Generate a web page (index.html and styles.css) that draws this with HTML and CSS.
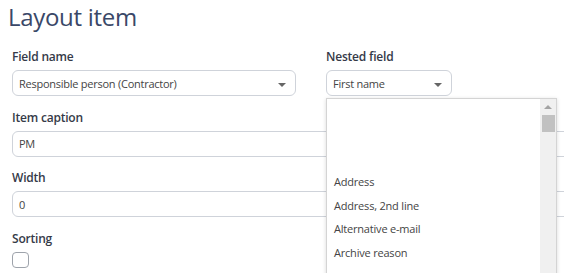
FILE: index.html
```html
<!DOCTYPE html>
<html lang="en">
<head>
    <meta charset="UTF-8">
    <title>Layout item</title>
    <link rel="stylesheet" href="styles.css">
</head>
<body>

    <div class="page">
        <h1>Layout item</h1>

        <!-- Field + nested field -->
        <div class="field-row">
            <div class="field">
                <label>Field name</label>
                <div class="select select-wide">
                    <span>Responsible person (Contractor)</span>
                    <span class="caret"></span>
                </div>
            </div>
            <div class="field nested">
                <label>Nested field</label>
                <div class="select select-small">
                    <span>First name</span>
                    <span class="caret"></span>
                </div>

                <!-- Open dropdown list -->
                <div class="dropdown-list">
                    <ul>
                        <li>Address</li>
                        <li>Address, 2nd line</li>
                        <li>Alternative e-mail</li>
                        <li>Archive reason</li>
                    </ul>
                    <div class="scrollbar">
                        <span class="arrow-up"></span>
                        <span class="thumb"></span>
                    </div>
                </div>
            </div>
        </div>

        <div class="field">
            <label>Item caption</label>
            <div class="input">PM</div>
        </div>

        <div class="field">
            <label>Width</label>
            <div class="input">0</div>
        </div>

        <div class="field">
            <label>Sorting</label>
            <div class="checkbox"></div>
        </div>
    </div>

</body>
</html>
```

FILE: styles.css
```css
body {
    margin: 0;
    font-family: 'Open Sans', sans-serif;
    background-color: #fff;
    overflow: hidden;
}

.page {
    height: 273px;
    overflow: hidden;
    padding: 0 0 0 12px;
    box-sizing: border-box;
    display: flex;
    flex-direction: column;
    gap: 12.5px;
}

h1 {
    margin: 0 0 1.5px -4px;
    font-size: 24px;
    font-weight: 400;
    letter-spacing: -0.3px;
    line-height: 34px;
    color: #3a4868;
}

.field-row {
    display: flex;
    gap: 30px;
}

.field {
    display: flex;
    flex-direction: column;
    gap: 4px;
}

.field label {
    font-size: 12px;
    font-weight: 600;
    letter-spacing: -0.2px;
    line-height: 18px;
    color: #353a48;
}

.nested {
    position: relative;
}

.select, .input {
    height: 26px;
    box-sizing: border-box;
    border: 1px solid #cfd3da;
    border-radius: 6px;
    font-size: 11px;
    letter-spacing: -0.25px;
    color: #444;
    display: flex;
    align-items: center;
    padding: 0 6px;
}

.select {
    justify-content: space-between;
    padding-right: 9px;
}

.select-wide {
    width: 284px;
}

.select-small {
    width: 126px;
}

.caret {
    width: 0;
    height: 0;
    border-left: 4px solid transparent;
    border-right: 4px solid transparent;
    border-top: 4px solid #666;
    margin-top: 4px;
}

.input {
    width: 600px;
}

.checkbox {
    width: 17px;
    height: 16px;
    box-sizing: border-box;
    border: 1px solid #9ea3ab;
    border-radius: 4px;
}

/* Dropdown list that is open over the form */
.dropdown-list {
    position: absolute;
    top: 50px;
    left: 0;
    width: 231px;
    height: 180px;
    box-sizing: border-box;
    background-color: #fff;
    border: 1px solid #d4d4d4;
    box-shadow: 0 1px 4px rgba(0, 0, 0, 0.15);
    display: flex;
    z-index: 10;
}

.dropdown-list ul {
    list-style: none;
    margin: 0;
    padding: 71px 0 0 0;
    flex: 1;
}

.dropdown-list li {
    font-size: 11px;
    letter-spacing: -0.2px;
    color: #444;
    line-height: 23.5px;
    padding-left: 7px;
}

.scrollbar {
    width: 16px;
    background-color: #f0f0f0;
    display: flex;
    flex-direction: column;
    align-items: center;
}

.arrow-up {
    width: 0;
    height: 0;
    border-left: 4px solid transparent;
    border-right: 4px solid transparent;
    border-bottom: 4px solid #a3a3a3;
    margin-top: 6px;
}

.thumb {
    width: 13px;
    height: 17px;
    background-color: #c1c1c1;
    margin-top: 6px;
}
```
